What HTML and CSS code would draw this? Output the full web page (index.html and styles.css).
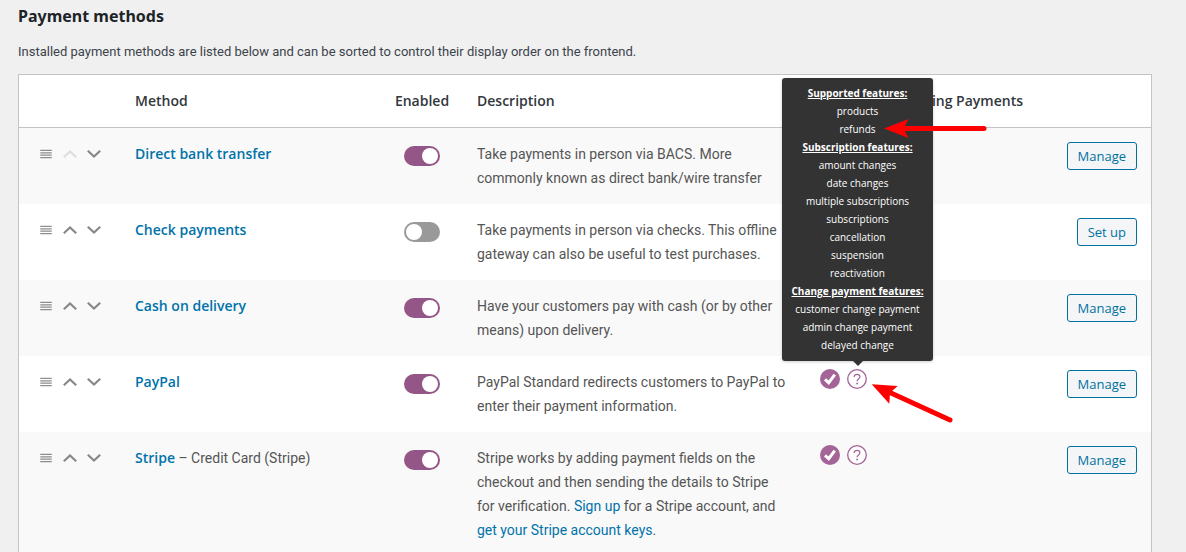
FILE: index.html
```html
<!DOCTYPE html>
<html lang="en">
<head>
<meta charset="utf-8">
<title>Payment methods</title>
<link rel="stylesheet" href="styles.css">
</head>
<body>
<svg class="symbols" aria-hidden="true">
  <symbol id="grip" viewBox="0 0 14 10"><path d="M.3 1.3h11.4M.3 3.8h11.4M.3 6.2h11.4M.3 8.7h11.4" stroke="#8c8c8c" stroke-width="1.2"/></symbol>
  <symbol id="up" viewBox="0 0 16 10"><path d="M1.8 8.2 8 2.4 14.2 8.2" fill="none" stroke="currentColor" stroke-width="2.2"/></symbol>
  <symbol id="down" viewBox="0 0 16 10"><path d="M1.8 1.8 8 7.6 14.2 1.8" fill="none" stroke="currentColor" stroke-width="2.2"/></symbol>
  <symbol id="check" viewBox="0 0 20 20"><circle cx="10" cy="10" r="10" fill="#a46497"/><path d="M5 10.4 8.7 13.7 14.8 5.6" fill="none" stroke="#fff" stroke-width="3"/></symbol>
  <symbol id="help" viewBox="0 0 20 20"><circle cx="10" cy="10" r="9.3" fill="#fff" stroke="#a46497" stroke-width="1.3"/><path d="M7.1 7.9c0-1.6 1.2-2.6 2.9-2.6s2.9 1 2.9 2.5c0 2.2-2.8 2.1-2.8 4.4" fill="none" stroke="#a46497" stroke-width="1.2"/><circle cx="10.1" cy="14.5" r=".9" fill="#a46497"/></symbol>
</svg>
<main class="page">
  <h2 class="title">Payment methods</h2>
  <p class="intro">Installed payment methods are listed below and can be sorted to control their display order on the frontend.</p>
  <table class="gateways">
    <colgroup><col class="col-sort"><col class="col-method"><col class="col-enabled"><col class="col-desc"><col class="col-renew"><col class="col-action"></colgroup>
    <thead>
      <tr><th></th><th>Method</th><th class="enabled">Enabled</th><th>Description</th><th class="renew-head">Automatic Recurring Payments</th><th></th></tr>
    </thead>
    <tbody>
      <tr>
        <td><div class="sort"><svg class="grip"><use href="#grip"/></svg><button class="move" disabled aria-label="Move up"><svg><use href="#up"/></svg></button><button class="move" aria-label="Move down"><svg><use href="#down"/></svg></button></div></td>
        <td><a class="name" href="#">Direct bank transfer</a></td>
        <td class="enabled"><input class="toggle" type="checkbox" checked aria-label="Enable Direct bank transfer"></td>
        <td>Take payments in person via BACS. More commonly known as direct bank/wire transfer</td>
        <td></td>
        <td class="action"><button class="button">Manage</button></td>
      </tr>
      <tr>
        <td><div class="sort"><svg class="grip"><use href="#grip"/></svg><button class="move" aria-label="Move up"><svg><use href="#up"/></svg></button><button class="move" aria-label="Move down"><svg><use href="#down"/></svg></button></div></td>
        <td><a class="name" href="#">Check payments</a></td>
        <td class="enabled"><input class="toggle" type="checkbox" aria-label="Enable Check payments"></td>
        <td>Take payments in person via checks. This offline gateway can also be useful to test purchases.</td>
        <td></td>
        <td class="action"><button class="button">Set up</button></td>
      </tr>
      <tr>
        <td><div class="sort"><svg class="grip"><use href="#grip"/></svg><button class="move" aria-label="Move up"><svg><use href="#up"/></svg></button><button class="move" aria-label="Move down"><svg><use href="#down"/></svg></button></div></td>
        <td><a class="name" href="#">Cash on delivery</a></td>
        <td class="enabled"><input class="toggle" type="checkbox" checked aria-label="Enable Cash on delivery"></td>
        <td>Have your customers pay with cash (or by other means) upon delivery.</td>
        <td></td>
        <td class="action"><button class="button">Manage</button></td>
      </tr>
      <tr>
        <td><div class="sort"><svg class="grip"><use href="#grip"/></svg><button class="move" aria-label="Move up"><svg><use href="#up"/></svg></button><button class="move" aria-label="Move down"><svg><use href="#down"/></svg></button></div></td>
        <td><a class="name" href="#">PayPal</a></td>
        <td class="enabled"><input class="toggle" type="checkbox" checked aria-label="Enable PayPal"></td>
        <td>PayPal Standard redirects customers to PayPal to enter their payment information.</td>
        <td class="renew">
          <div class="status">
            <svg><use href="#check"/></svg>
            <div class="tip-anchor">
              <svg><use href="#help"/></svg>
              <div class="tip" role="tooltip">
                <strong>Supported features:</strong>
                <span>products</span>
                <span>refunds</span>
                <strong>Subscription features:</strong>
                <span>amount changes</span>
                <span>date changes</span>
                <span>multiple subscriptions</span>
                <span>subscriptions</span>
                <span>cancellation</span>
                <span>suspension</span>
                <span>reactivation</span>
                <strong>Change payment features:</strong>
                <span>customer change payment</span>
                <span>admin change payment</span>
                <span>delayed change</span>
              </div>
              <svg class="arrows" viewBox="0 0 110 310" fill="#f00" stroke="#f00">
                <path d="M21 18.5H103" stroke-width="5" stroke-linecap="round"/>
                <path d="M3 18.5 27.5 9 22.5 18.5 27.5 28Z" stroke="none"/>
                <path d="M10 283 69 310" stroke-width="5" stroke-linecap="round"/>
                <path d="M-9.3 274.3 16.7 276 9 282.7 8.3 293.7Z" stroke="none"/>
              </svg>
            </div>
          </div>
        </td>
        <td class="action"><button class="button">Manage</button></td>
      </tr>
      <tr>
        <td><div class="sort"><svg class="grip"><use href="#grip"/></svg><button class="move" aria-label="Move up"><svg><use href="#up"/></svg></button><button class="move" aria-label="Move down"><svg><use href="#down"/></svg></button></div></td>
        <td><a class="name" href="#">Stripe</a> – Credit Card (Stripe)</td>
        <td class="enabled"><input class="toggle" type="checkbox" checked aria-label="Enable Stripe"></td>
        <td>Stripe works by adding payment fields on the checkout and then sending the details to Stripe for verification. <a href="#">Sign up</a> for a Stripe account, and <a href="#">get your Stripe account keys</a>.</td>
        <td class="renew"><div class="status"><svg><use href="#check"/></svg><svg><use href="#help"/></svg></div></td>
        <td class="action"><button class="button">Manage</button></td>
      </tr>
    </tbody>
  </table>
</main>
</body>
</html>
```
FILE: styles.css
```css
* { box-sizing: border-box; }

body {
  margin: 0;
  background: #f0f0f1;
  color: #3c434a;
  font: 13px/20px Roboto, "Open Sans", sans-serif;
}

.symbols { display: none; }

.page { padding: 6px 34px 0 18px; }

.title {
  margin: 0;
  color: #1d2327;
  font: 700 16px/20px "Noto Sans", sans-serif;
}

.intro { margin: 16px 0 12px; }

a { color: #0073aa; text-decoration: none; }

.gateways {
  width: 100%;
  table-layout: fixed;
  border: 1px solid #c3c4c7;
  border-spacing: 0;
  background: #fff;
  color: #555;
  font-size: 14px;
  line-height: 24px;
}

.col-sort { width: 106px; }
.col-enabled { width: 90px; }
.col-desc { width: 343px; }
.col-renew { width: 240px; }
.col-action { width: 101px; }

th, td {
  padding: 14px 10px;
  text-align: left;
  vertical-align: top;
}

td:first-child { padding-left: 21px; }

th {
  border-bottom: 1px solid #c3c4c7;
  color: #32373c;
  font: 600 14px/24px "Open Sans", sans-serif;
  white-space: nowrap;
}

td:nth-child(4) { padding-right: 23px; }

.gateways .enabled { padding-left: 0; padding-right: 0; text-align: center; }

.gateways .renew { padding-top: 13px; }

.gateways .renew-head { padding-left: 0; padding-right: 27px; text-align: right; }

tbody tr:nth-child(odd) { background: #f9f9f9; }

.name { font: 600 14px/24px "Open Sans", sans-serif; }

.sort { display: flex; align-items: center; gap: 8px; height: 24px; }
.grip { width: 14px; height: 10px; }

.move {
  width: 16px;
  height: 10px;
  padding: 0;
  border: 0;
  background: none;
  color: #888;
}
.move:disabled { color: #ddd; }
.move svg { display: block; width: 16px; height: 10px; }

.toggle {
  appearance: none;
  display: block;
  width: 36px;
  height: 20px;
  margin: 4px auto 0;
  padding: 2px;
  border-radius: 10px;
  background: #999;
}
.toggle::before {
  content: "";
  display: block;
  width: 16px;
  height: 16px;
  border-radius: 50%;
  background: #fff;
}
.toggle:checked { background: #935687; }
.toggle:checked::before { margin-left: auto; }

.status { display: flex; gap: 7px; }
.status svg { display: block; width: 20px; height: 20px; }

.tip-anchor { position: relative; }

.tip {
  position: absolute;
  bottom: calc(100% + 8px);
  left: 50%;
  display: grid;
  width: 151px;
  margin-left: -75px;
  padding: 6px 0 7px;
  border-radius: 3px;
  background: #333;
  box-shadow: 0 1px 3px rgba(0, 0, 0, 0.2);
  color: #fff;
  font: 10px/18px "Open Sans", sans-serif;
  text-align: center;
}
.tip strong { text-decoration: underline; }
.tip::after {
  content: "";
  position: absolute;
  top: 100%;
  left: 50%;
  margin-left: -5px;
  border: 5px solid transparent;
  border-top-color: #333;
  border-bottom: 0;
}

.tip-anchor .arrows {
  position: absolute;
  bottom: -31px;
  left: 34px;
  width: 110px;
  height: 310px;
  overflow: visible;
}

.gateways .action { padding-right: 14px; text-align: right; }

.button {
  display: inline-block;
  height: 28px;
  padding: 0 10px;
  border: 1px solid #0071a1;
  border-radius: 3px;
  background: #f3f5f6;
  color: #0071a1;
  font: 13px/26px "Open Sans", sans-serif;
  vertical-align: top;
}
```
